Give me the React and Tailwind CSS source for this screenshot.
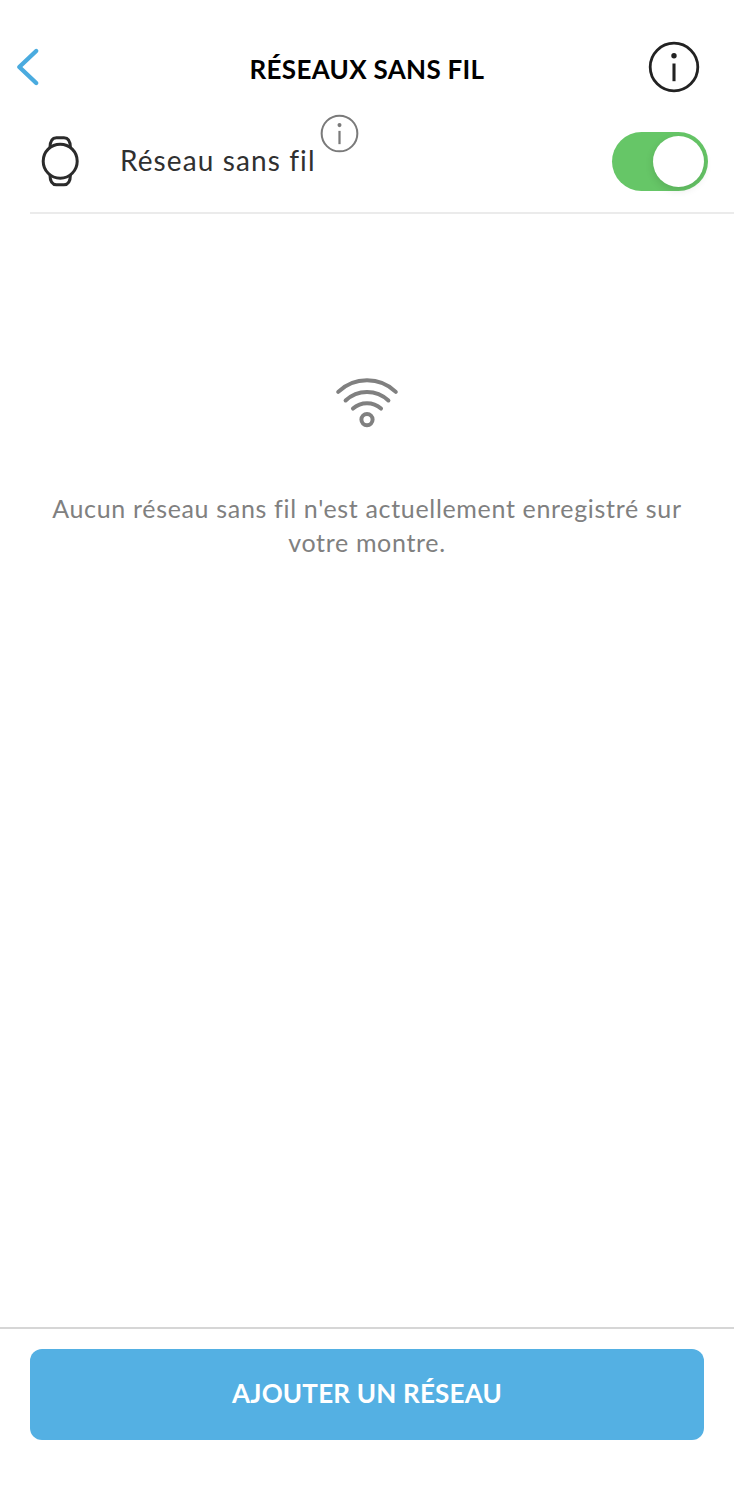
import React from 'react';

const BackIcon = () => (
  <svg width="30" height="44" viewBox="0 0 30 44" fill="none" stroke="#4aabdf" strokeWidth="4.4" strokeLinecap="round" strokeLinejoin="round">
    <path d="M24.2 6 7.300 22l16.900 16" />
  </svg>
);

const InfoIcon = ({ size, stroke, className }) => (
  <svg width={size} height={size} viewBox="0 0 52 52" fill="none" stroke="currentColor" strokeWidth={stroke} className={className}>
    <circle cx="26" cy="26" r="23.800" />
    <path d="M26 22.500v17.700" strokeWidth={stroke * 1.1} />
    <circle cx="26" cy="14.800" r="2.700" fill="currentColor" stroke="none" />
  </svg>
);

const WatchIcon = () => (
  <svg width="40" height="52" viewBox="0 0 40 52" fill="none" stroke="#2b2b2b" strokeWidth="3" strokeLinejoin="round">
    <circle cx="20.200" cy="26.200" r="17" />
    <path d="M9.900 13c.1-6.200 2-10.300 6.500-10.300h7.600c4.500 0 6.400 4.100 6.500 10.300" />
    <path d="M9.900 39.400c.1 6.200 2 10.300 6.500 10.300h7.600c4.500 0 6.400-4.100 6.500-10.300" />
  </svg>
);

const WifiIcon = () => (
  <svg width="66" height="52" viewBox="0 0 66 52" fill="none" stroke="#808080" strokeWidth="4" strokeLinecap="round">
    <path d="M4.200 14.900A41.700 41.700 0 0 1 61.800 14.900" />
    <path d="M11.600 23.500A31 31 0 0 1 54.400 23.500" />
    <path d="M19 31.600A21 21 0 0 1 47 31.600" />
    <circle cx="33" cy="42.600" r="5.600" />
  </svg>
);

const Header = () => (
  <header className="flex h-[112px] items-start justify-between pl-3 pr-[34px]">
    <button className="mt-[45px] w-[74px]" aria-label="Retour">
      <BackIcon />
    </button>
    <h1 className="mt-[53px] whitespace-nowrap text-[26px] leading-8 font-bold tracking-[0.3px] text-black">
      RÉSEAUX SANS FIL
    </h1>
    <button className="mt-[40.500px] text-[#222222]" aria-label="Informations">
      <InfoIcon size={52} stroke={2.8} />
    </button>
  </header>
);

const App = () => {
  return (
    <div className="flex h-[1500px] w-full flex-col bg-white font-['Lato','Open_Sans',sans-serif]">
      <Header />

      {/* Wifi toggle */}
      <div className="ml-[30px] flex h-[102px] items-start border-b-2 border-[#ebebeb] pr-[26px]">
        <div className="mt-[23px] ml-[10px] w-[80px]">
          <WatchIcon />
        </div>
        <span className="mt-[31px] whitespace-nowrap text-[28px] leading-[34px] tracking-[1.1px] text-[#303030]">
          Réseau sans fil
        </span>
        <InfoIcon size={39} stroke={2.7} className="mt-[1.500px] ml-1 text-[#7a7a7a]" />
        <button className="mt-[20px] ml-auto flex h-[59px] w-24 items-center justify-end rounded-full bg-[#66c667] pr-1" role="switch" aria-checked="true">
          <span className="h-[51px] w-[51px] rounded-full bg-white shadow-[0_3px_8px_rgba(0,0,0,0.12)]" />
        </button>
      </div>

      {/* Empty state */}
      <main className="flex flex-1 flex-col items-center pt-[163px]">
        <WifiIcon />
        <p className="mt-[62px] text-center text-[25px] leading-[34px] tracking-[0.67px] whitespace-nowrap text-[#808080]">
          Aucun réseau sans fil n'est actuellement enregistré sur
          <br />
          votre montre.
        </p>
      </main>

      <footer className="h-[173px] border-t-2 border-[#d6d6d6] px-[30px] pt-5">
        <button className="flex h-[91px] w-full items-start justify-center rounded-xl bg-[#54b0e3] pt-[28px] text-white">
          <span className="whitespace-nowrap text-[26px] leading-8 font-bold tracking-[0.2px]">
            AJOUTER UN RÉSEAU
          </span>
        </button>
      </footer>
    </div>
  );
};

export default App;
